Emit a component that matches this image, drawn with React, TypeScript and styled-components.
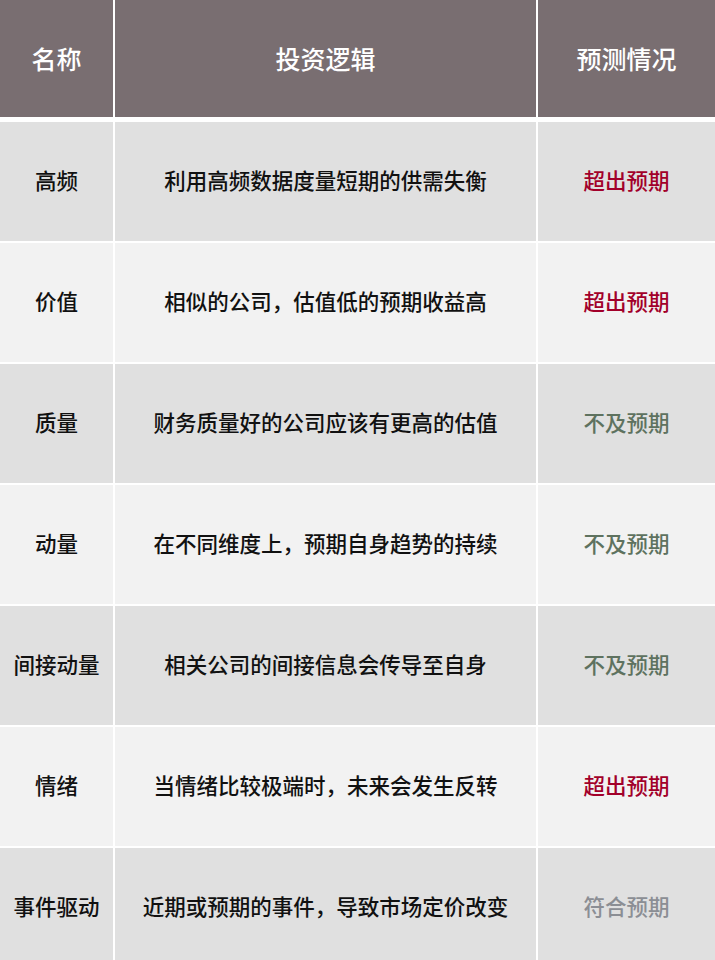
import React from 'react'
import styled, { createGlobalStyle } from 'styled-components'

const GlobalStyle = createGlobalStyle`
    body {
        margin: 0;
        background: #ffffff;
        font-family: "Liberation Serif", "Noto Sans CJK SC", serif;
    }
`

type Outlook = 'beat' | 'miss' | 'meet'

const outlookColor: Record<Outlook, string> = {
    beat: '#a2002a',
    miss: '#5e725f',
    meet: '#8b8e94',
}

const rows: { name: string; logic: string; outlook: Outlook; label: string }[] = [
    { name: '高频', logic: '利用高频数据度量短期的供需失衡', outlook: 'beat', label: '超出预期' },
    { name: '价值', logic: '相似的公司，估值低的预期收益高', outlook: 'beat', label: '超出预期' },
    { name: '质量', logic: '财务质量好的公司应该有更高的估值', outlook: 'miss', label: '不及预期' },
    { name: '动量', logic: '在不同维度上，预期自身趋势的持续', outlook: 'miss', label: '不及预期' },
    { name: '间接动量', logic: '相关公司的间接信息会传导至自身', outlook: 'miss', label: '不及预期' },
    { name: '情绪', logic: '当情绪比较极端时，未来会发生反转', outlook: 'beat', label: '超出预期' },
    { name: '事件驱动', logic: '近期或预期的事件，导致市场定价改变', outlook: 'meet', label: '符合预期' },
]

const Table = styled.div`
    display: grid;
    grid-template-columns: 113px 421px 1fr;
    grid-template-rows: 120px;
    grid-auto-rows: 119px;
    column-gap: 2px;
    row-gap: 2px;
    background: #ffffff;
`

const HeadCell = styled.div`
    display: flex;
    align-items: center;
    justify-content: center;
    align-self: start;
    height: 117px;
    padding-bottom: 2px;
    box-sizing: border-box;
    background: #796e71;
    color: #ffffff;
    font-size: 25px;
    font-weight: 500;
`

const Cell = styled.div<{ $even: boolean; $color?: string }>`
    display: flex;
    align-items: center;
    justify-content: center;
    padding-bottom: 5px;
    box-sizing: border-box;
    background: ${({ $even }) => ($even ? '#f2f2f2' : '#e0e0e0')};
    color: ${({ $color }) => $color || '#111111'};
    font-size: 21.5px;
    font-weight: 500;
    white-space: nowrap;
`

export default function App() {
    return <>
        <GlobalStyle />
        <Table>
            <HeadCell>名称</HeadCell>
            <HeadCell>投资逻辑</HeadCell>
            <HeadCell>预测情况</HeadCell>
            {rows.map((r, i) => (
                <React.Fragment key={r.name}>
                    <Cell $even={i % 2 === 1}>{r.name}</Cell>
                    <Cell $even={i % 2 === 1}>{r.logic}</Cell>
                    <Cell $even={i % 2 === 1} $color={outlookColor[r.outlook]}>{r.label}</Cell>
                </React.Fragment>
            ))}
        </Table>
    </>
}
